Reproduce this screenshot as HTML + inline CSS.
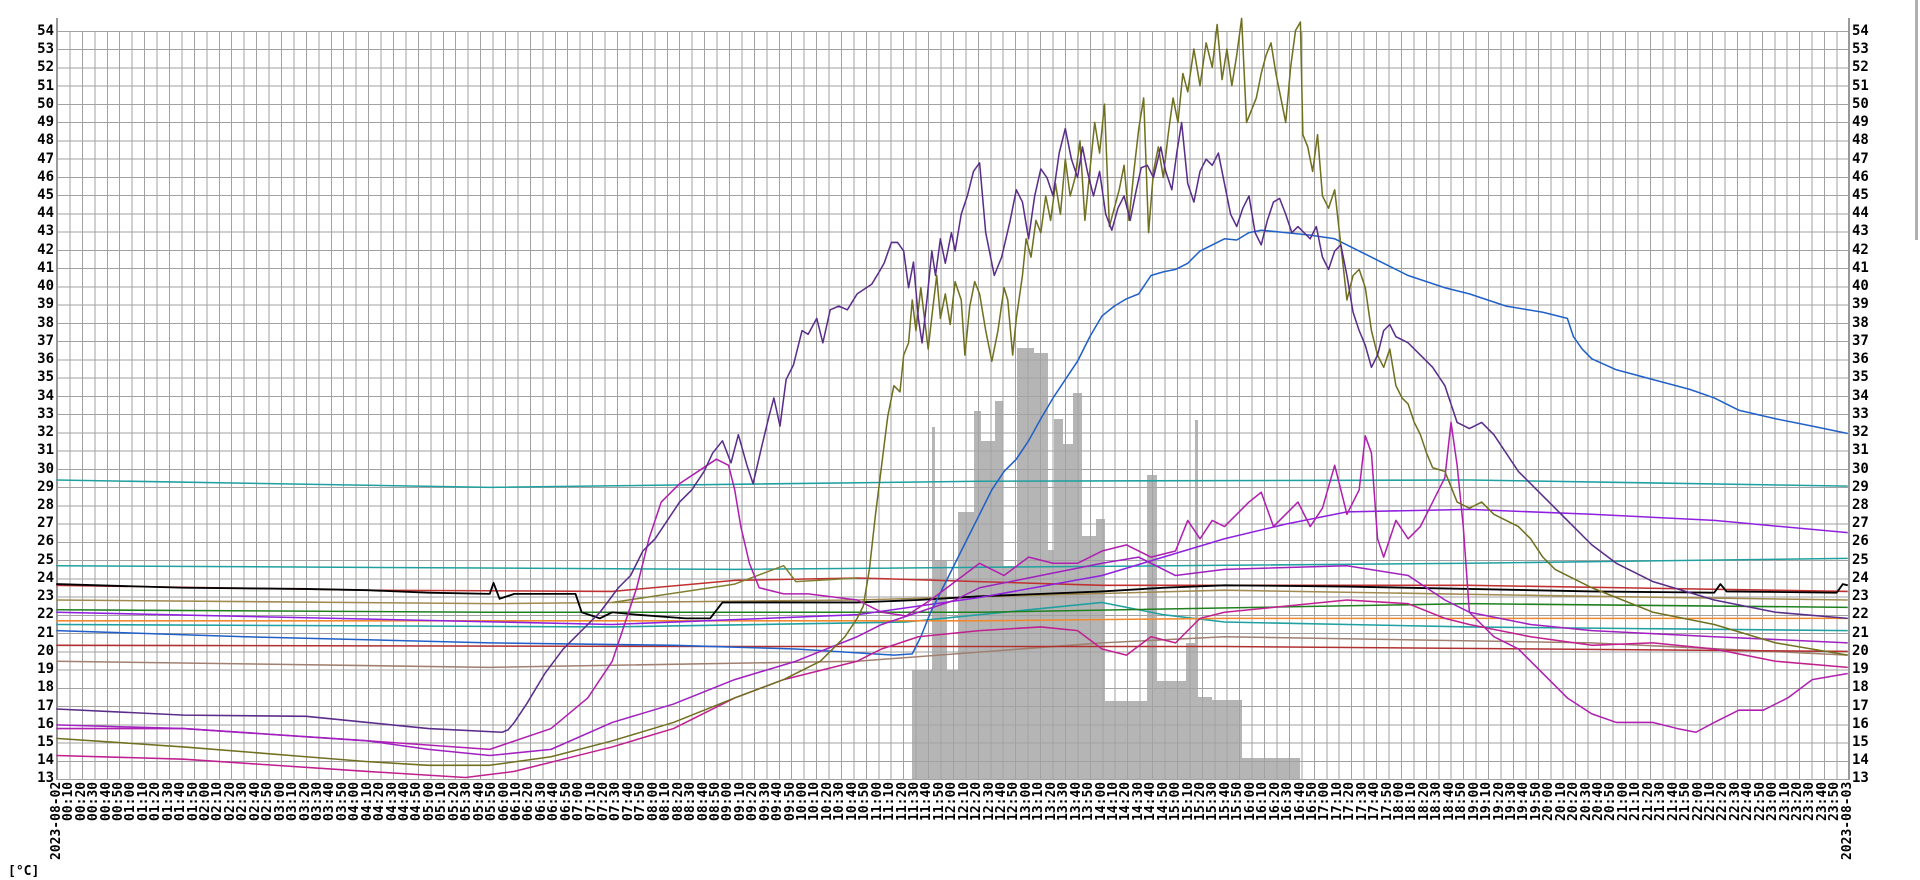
<!DOCTYPE html>
<html><head><meta charset="utf-8">
<style>
html,body{margin:0;padding:0;width:1920px;height:880px;background:#fff;overflow:hidden;position:relative;font-family:"DejaVu Sans Mono","Liberation Mono",monospace;font-weight:bold;color:#000}
#grid{position:absolute;left:57px;top:31px;width:1792px;height:748px;
background:
repeating-linear-gradient(to right,#a2a2a2 0,#a2a2a2 1px,transparent 1px,transparent 12.444px),
repeating-linear-gradient(to bottom,#a2a2a2 0,#a2a2a2 1px,transparent 1px,transparent 18.244px);}
#grid2{position:absolute;left:57px;top:779px;width:1793px;height:1px;background:#a2a2a2}
.ax{position:absolute;top:18px;height:762px;width:2px;background:#999}
svg{position:absolute;left:0;top:0}
#yl,#yr{position:absolute;top:21.88px;display:flex;flex-direction:column;font-size:14px}
#yl{left:0;width:54px;text-align:right}
#yr{left:1852px;width:40px;text-align:left}
#yl div,#yr div{height:18.244px;line-height:18.244px}
#xl{position:absolute;left:50.78px;top:782px;display:flex;font-size:13px}
#xl div{width:12.444px;height:95px;writing-mode:vertical-rl;transform:rotate(180deg);text-align:end;line-height:12.444px}
#unit{position:absolute;left:8px;top:864px;font-size:13px}
#sb{position:absolute;left:1915px;top:0;width:3px;height:240px;background:#b0b0b0}
</style></head><body>
<svg width="1920" height="880">
<g fill="rgba(90,90,90,0.45)">
<rect x="912" y="670" width="20" height="109"/>
<rect x="932" y="427" width="3" height="352"/>
<rect x="935" y="561" width="12" height="218"/>
<rect x="947" y="670" width="11" height="109"/>
<rect x="958" y="512" width="16" height="267"/>
<rect x="974" y="411" width="7" height="368"/>
<rect x="981" y="441" width="14" height="338"/>
<rect x="995" y="401" width="8" height="378"/>
<rect x="1003" y="566" width="14" height="213"/>
<rect x="1017" y="348" width="17" height="431"/>
<rect x="1034" y="353" width="14" height="426"/>
<rect x="1048" y="550" width="6" height="229"/>
<rect x="1054" y="419" width="9" height="360"/>
<rect x="1063" y="444" width="10" height="335"/>
<rect x="1073" y="393" width="9" height="386"/>
<rect x="1082" y="536" width="14" height="243"/>
<rect x="1096" y="519" width="9" height="260"/>
<rect x="1105" y="701" width="42" height="78"/>
<rect x="1147" y="475" width="10" height="304"/>
<rect x="1157" y="681" width="29" height="98"/>
<rect x="1186" y="643" width="9" height="136"/>
<rect x="1195" y="420" width="3" height="359"/>
<rect x="1198" y="697" width="14" height="82"/>
<rect x="1212" y="700" width="30" height="79"/>
<rect x="1242" y="758" width="58" height="21"/>
</g>
</svg>
<div id="grid"></div><div id="grid2"></div>
<div class="ax" style="left:56px"></div><div class="ax" style="left:1848px"></div>
<svg width="1920" height="880" viewBox="0 0 1568 718.67">
<g fill="none" stroke-width="1.25" stroke-linejoin="round">
<polyline stroke="#a08070" points="46,540 400,545 700,540 900,525 1000,520 1300,525 1509,535"/>
<polyline stroke="#b03030" points="46,527 600,528 1000,528 1509,532"/>
<polyline stroke="#20a0a0" points="46,392 400,398 800,393 1200,392 1509,397"/>
<polyline stroke="#20a0a0" points="46,462 600,465 1200,460 1509,456"/>
<polyline stroke="#20a0a0" points="46,510 500,512 740,508 800,502 850,497 900,492 950,502 1000,508 1200,512 1509,515"/>
<polyline stroke="#c03030" points="46,478 300,482 500,483 600,474 700,472 800,475 900,478 1000,478 1200,478 1509,483"/>
<polyline stroke="#a08a50" points="46,490 400,493 700,490 1000,482 1300,487 1509,490"/>
<polyline stroke="#208020" points="46,498 400,500 800,500 1200,493 1509,496"/>
<polyline stroke="#f08a30" points="46,507 500,507 800,507 1000,505 1509,505"/>
<polyline stroke="#808030" points="500,492 600,477 640,462 650,475 700,472"/>
<polyline stroke="#000" stroke-width="1.5" points="46,477 150,480 250,481 300,482 350,484 400,485 403,476 408,489 420,485 470,485 475,500 490,505 500,500 520,502 560,505 580,505 590,492 650,492 700,492 750,490 800,487 850,485 900,483 950,480 1000,478 1100,479 1200,481 1300,483 1400,484 1405,477 1410,483 1500,484 1505,477 1509,478"/>
<polyline stroke="#9020e0" points="46,500 500,510 700,502 800,488 900,470 1000,440 1050,428 1100,418 1200,416 1300,420 1400,425 1509,435"/>
<polyline stroke="#2060c8" points="46,515 200,520 400,525 550,527 650,530 730,535 745,534 752,520 760,500 770,480 780,460 790,440 800,420 810,400 820,385 830,375 840,360 850,342 860,325 870,310 880,295 890,275 900,258 910,250 920,244 930,240 940,225 950,222 960,220 970,215 980,205 990,200 1000,195 1010,196 1020,190 1030,188 1050,190 1070,192 1090,195 1110,205 1130,215 1150,225 1180,235 1200,240 1230,250 1260,255 1280,260 1285,275 1292,285 1300,293 1320,302 1350,310 1380,318 1400,325 1420,335 1450,342 1480,348 1509,354"/>
<polyline stroke="#b020b0" points="46,595 150,595 300,605 400,612 450,595 480,570 500,540 510,510 520,480 530,440 540,410 555,395 570,385 585,375 595,380 600,400 605,430 612,460 620,480 640,485 660,485 700,490 720,500 740,503 760,490 780,475 800,460 820,470 840,455 860,460 880,460 900,450 920,445 940,455 960,450 970,425 980,440 990,425 1000,430 1010,420 1020,410 1030,402 1040,430 1050,420 1060,410 1070,430 1080,415 1090,380 1100,420 1110,400 1115,356 1120,370 1125,440 1130,455 1140,425 1150,440 1160,430 1170,410 1180,390 1185,345 1190,380 1195,430 1200,500 1220,520 1240,530 1260,550 1280,570 1300,583 1320,590 1350,590 1370,595 1385,598 1400,590 1420,580 1440,580 1460,570 1480,555 1509,550"/>
<polyline stroke="#c02090" points="46,617 150,620 300,630 380,635 420,630 460,620 500,610 550,595 600,570 640,555 680,545 700,540 720,530 750,520 800,515 850,512 880,515 900,530 920,535 940,520 960,525 980,505 1000,500 1050,495 1100,490 1150,493 1180,505 1200,510 1250,520 1300,527 1350,525 1400,530 1450,540 1509,545"/>
<polyline stroke="#a020c0" points="46,592 150,595 300,605 350,612 400,617 450,612 500,590 550,575 600,555 650,540 700,520 720,510 750,500 780,490 800,480 850,470 900,460 930,455 960,470 1000,465 1100,462 1150,470 1180,490 1200,500 1250,510 1300,515 1400,520 1509,525"/>
<polyline stroke="#707020" points="46,603 150,610 250,618 300,622 350,625 400,625 450,618 500,605 550,590 600,570 640,555 670,540 690,520 700,505 705,495 710,465 715,420 720,380 725,340 730,315 735,320 738,290 742,280 745,245 748,270 752,235 755,260 758,285 762,250 765,225 768,260 772,240 776,265 780,230 785,245 788,290 792,250 796,230 800,240 805,270 810,295 815,270 820,235 823,245 827,290 830,260 835,225 838,195 842,210 846,180 850,190 854,160 858,180 862,150 866,175 870,130 874,160 878,145 882,115 886,180 890,140 894,100 898,125 902,85 906,185 910,170 914,155 918,135 922,180 926,140 930,105 934,80 938,190 942,140 946,120 950,145 954,110 958,80 962,100 966,60 970,75 975,40 980,70 985,35 990,55 994,20 998,65 1002,40 1006,70 1010,45 1014,15 1018,100 1022,90 1026,80 1030,60 1034,45 1038,35 1042,60 1046,80 1050,100 1054,55 1058,25 1062,18 1064,110 1068,120 1072,140 1076,110 1080,160 1085,170 1090,155 1095,200 1100,245 1105,225 1110,220 1115,235 1120,270 1125,290 1130,300 1135,285 1140,315 1145,325 1150,330 1155,345 1160,355 1165,370 1170,382 1180,385 1190,410 1200,415 1210,410 1220,420 1230,425 1240,430 1250,440 1260,455 1270,465 1280,470 1300,480 1350,500 1400,510 1450,525 1509,535"/>
<polyline stroke="#5a2d8a" points="46,579 150,584 250,585 300,590 350,595 410,598 415,596 420,590 430,575 445,550 460,530 475,515 490,500 505,480 515,470 525,450 535,440 545,425 555,410 565,400 575,385 582,370 590,360 597,378 603,355 610,380 615,395 622,365 628,340 632,325 637,348 642,310 648,298 655,270 660,273 667,260 672,280 678,253 685,250 692,253 700,240 712,232 718,222 722,215 728,198 733,198 738,205 742,235 746,214 750,260 753,280 757,245 761,205 764,225 768,195 772,215 777,190 780,205 785,175 790,160 795,140 800,133 805,190 812,225 818,210 825,180 830,155 835,165 840,195 845,160 850,138 855,145 860,160 865,125 870,105 875,130 880,145 884,120 888,140 893,160 898,140 903,175 908,188 913,170 918,160 923,180 928,155 932,137 937,135 942,145 948,120 952,140 957,155 961,125 965,100 970,150 975,165 980,140 985,130 990,135 995,125 1000,150 1005,175 1010,185 1015,170 1020,160 1025,190 1030,200 1035,180 1040,165 1045,162 1050,175 1055,190 1060,185 1065,190 1070,195 1075,185 1080,210 1085,220 1090,205 1095,200 1100,225 1105,255 1110,270 1115,282 1120,300 1125,290 1130,270 1135,265 1140,275 1150,280 1160,290 1170,300 1180,315 1185,330 1190,345 1200,350 1210,345 1220,355 1230,370 1240,385 1260,405 1280,425 1300,445 1320,460 1350,475 1400,490 1450,500 1509,505"/>
</g>
</svg>
<div id="yl"><div>54</div><div>53</div><div>52</div><div>51</div><div>50</div><div>49</div><div>48</div><div>47</div><div>46</div><div>45</div><div>44</div><div>43</div><div>42</div><div>41</div><div>40</div><div>39</div><div>38</div><div>37</div><div>36</div><div>35</div><div>34</div><div>33</div><div>32</div><div>31</div><div>30</div><div>29</div><div>28</div><div>27</div><div>26</div><div>25</div><div>24</div><div>23</div><div>22</div><div>21</div><div>20</div><div>19</div><div>18</div><div>17</div><div>16</div><div>15</div><div>14</div><div>13</div></div>
<div id="yr"><div>54</div><div>53</div><div>52</div><div>51</div><div>50</div><div>49</div><div>48</div><div>47</div><div>46</div><div>45</div><div>44</div><div>43</div><div>42</div><div>41</div><div>40</div><div>39</div><div>38</div><div>37</div><div>36</div><div>35</div><div>34</div><div>33</div><div>32</div><div>31</div><div>30</div><div>29</div><div>28</div><div>27</div><div>26</div><div>25</div><div>24</div><div>23</div><div>22</div><div>21</div><div>20</div><div>19</div><div>18</div><div>17</div><div>16</div><div>15</div><div>14</div><div>13</div></div>
<div id="xl"><div>2023-08-02</div><div>00:10</div><div>00:20</div><div>00:30</div><div>00:40</div><div>00:50</div><div>01:00</div><div>01:10</div><div>01:20</div><div>01:30</div><div>01:40</div><div>01:50</div><div>02:00</div><div>02:10</div><div>02:20</div><div>02:30</div><div>02:40</div><div>02:50</div><div>03:00</div><div>03:10</div><div>03:20</div><div>03:30</div><div>03:40</div><div>03:50</div><div>04:00</div><div>04:10</div><div>04:20</div><div>04:30</div><div>04:40</div><div>04:50</div><div>05:00</div><div>05:10</div><div>05:20</div><div>05:30</div><div>05:40</div><div>05:50</div><div>06:00</div><div>06:10</div><div>06:20</div><div>06:30</div><div>06:40</div><div>06:50</div><div>07:00</div><div>07:10</div><div>07:20</div><div>07:30</div><div>07:40</div><div>07:50</div><div>08:00</div><div>08:10</div><div>08:20</div><div>08:30</div><div>08:40</div><div>08:50</div><div>09:00</div><div>09:10</div><div>09:20</div><div>09:30</div><div>09:40</div><div>09:50</div><div>10:00</div><div>10:10</div><div>10:20</div><div>10:30</div><div>10:40</div><div>10:50</div><div>11:00</div><div>11:10</div><div>11:20</div><div>11:30</div><div>11:40</div><div>11:50</div><div>12:00</div><div>12:10</div><div>12:20</div><div>12:30</div><div>12:40</div><div>12:50</div><div>13:00</div><div>13:10</div><div>13:20</div><div>13:30</div><div>13:40</div><div>13:50</div><div>14:00</div><div>14:10</div><div>14:20</div><div>14:30</div><div>14:40</div><div>14:50</div><div>15:00</div><div>15:10</div><div>15:20</div><div>15:30</div><div>15:40</div><div>15:50</div><div>16:00</div><div>16:10</div><div>16:20</div><div>16:30</div><div>16:40</div><div>16:50</div><div>17:00</div><div>17:10</div><div>17:20</div><div>17:30</div><div>17:40</div><div>17:50</div><div>18:00</div><div>18:10</div><div>18:20</div><div>18:30</div><div>18:40</div><div>18:50</div><div>19:00</div><div>19:10</div><div>19:20</div><div>19:30</div><div>19:40</div><div>19:50</div><div>20:00</div><div>20:10</div><div>20:20</div><div>20:30</div><div>20:40</div><div>20:50</div><div>21:00</div><div>21:10</div><div>21:20</div><div>21:30</div><div>21:40</div><div>21:50</div><div>22:00</div><div>22:10</div><div>22:20</div><div>22:30</div><div>22:40</div><div>22:50</div><div>23:00</div><div>23:10</div><div>23:20</div><div>23:30</div><div>23:40</div><div>23:50</div><div>2023-08-03</div></div>
<div id="unit">[°C]</div>
<div id="sb"></div>
</body></html>
